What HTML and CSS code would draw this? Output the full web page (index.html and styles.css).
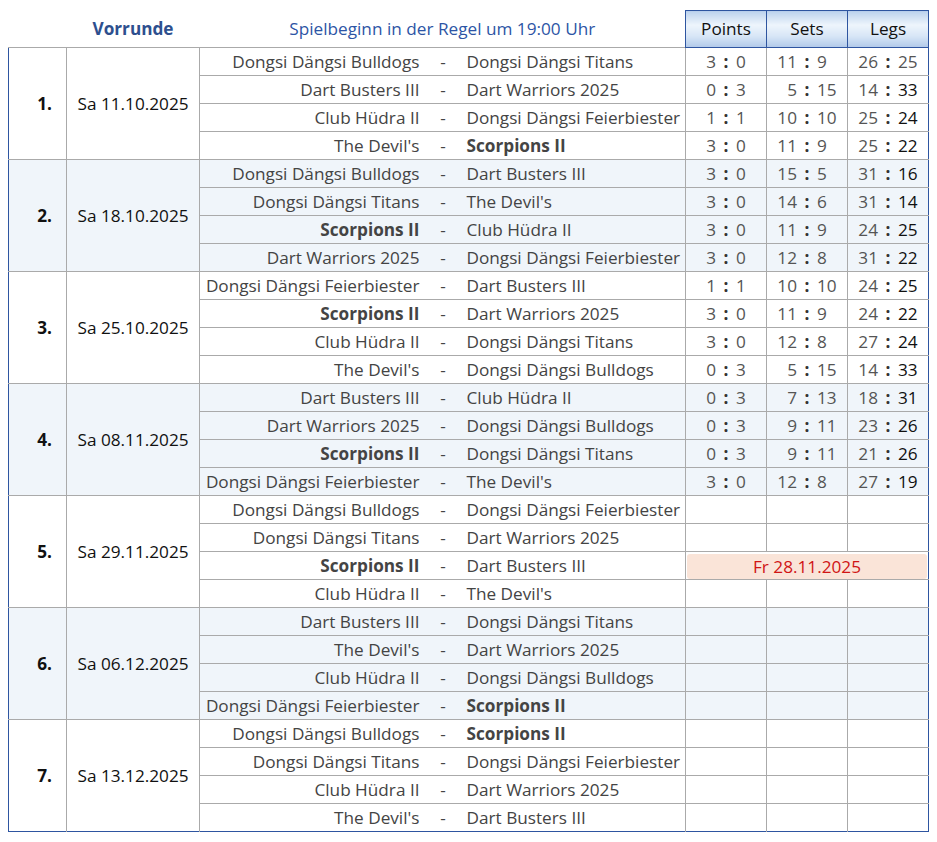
FILE: index.html
```html
<!DOCTYPE html>
<html lang="de">
<head>
<meta charset="utf-8">
<title>Vorrunde</title>
<link rel="stylesheet" href="styles.css">
</head>
<body>
<table class="sched">
  <colgroup>
    <col class="c-rnd"><col class="c-date"><col class="c-home"><col class="c-dash"><col class="c-away"><col class="c-sc"><col class="c-sc"><col class="c-sc">
  </colgroup>
  <thead>
    <tr>
      <th class="h-plain"></th>
      <th class="h-plain h-title">Vorrunde</th>
      <th class="h-plain h-note" colspan="3">Spielbeginn in der Regel um 19:00 Uhr</th>
      <th class="h-box">Points</th>
      <th class="h-box">Sets</th>
      <th class="h-box">Legs</th>
    </tr>
  </thead>
  <tbody>
    <tr><td class="rnd" rowspan="4">1.</td><td class="date" rowspan="4">Sa 11.10.2025</td><td class="home">Dongsi Dängsi Bulldogs</td><td class="dash">-</td><td class="away">Dongsi Dängsi Titans</td><td class="sc"><span class="l">3</span><b>:</b><span class="r">0</span></td><td class="sc"><span class="l">11</span><b>:</b><span class="r">9</span></td><td class="sc"><span class="l">26</span><b>:</b><span class="r">25</span></td></tr>
    <tr><td class="home">Dart Busters III</td><td class="dash">-</td><td class="away">Dart Warriors 2025</td><td class="sc"><span class="l">0</span><b>:</b><span class="r">3</span></td><td class="sc"><span class="l">5</span><b>:</b><span class="r">15</span></td><td class="sc lg"><span class="l">14</span><b>:</b><span class="r">33</span></td></tr>
    <tr><td class="home">Club Hüdra II</td><td class="dash">-</td><td class="away">Dongsi Dängsi Feierbiester</td><td class="sc"><span class="l">1</span><b>:</b><span class="r">1</span></td><td class="sc"><span class="l">10</span><b>:</b><span class="r">10</span></td><td class="sc lg"><span class="l">25</span><b>:</b><span class="r">24</span></td></tr>
    <tr><td class="home">The Devil's</td><td class="dash">-</td><td class="away"><strong>Scorpions II</strong></td><td class="sc"><span class="l">3</span><b>:</b><span class="r">0</span></td><td class="sc"><span class="l">11</span><b>:</b><span class="r">9</span></td><td class="sc lg"><span class="l">25</span><b>:</b><span class="r">22</span></td></tr>
  </tbody>
  <tbody class="alt">
    <tr><td class="rnd" rowspan="4">2.</td><td class="date" rowspan="4">Sa 18.10.2025</td><td class="home">Dongsi Dängsi Bulldogs</td><td class="dash">-</td><td class="away">Dart Busters III</td><td class="sc"><span class="l">3</span><b>:</b><span class="r">0</span></td><td class="sc"><span class="l">15</span><b>:</b><span class="r">5</span></td><td class="sc lg"><span class="l">31</span><b>:</b><span class="r">16</span></td></tr>
    <tr><td class="home">Dongsi Dängsi Titans</td><td class="dash">-</td><td class="away">The Devil's</td><td class="sc"><span class="l">3</span><b>:</b><span class="r">0</span></td><td class="sc"><span class="l">14</span><b>:</b><span class="r">6</span></td><td class="sc lg"><span class="l">31</span><b>:</b><span class="r">14</span></td></tr>
    <tr><td class="home"><strong>Scorpions II</strong></td><td class="dash">-</td><td class="away">Club Hüdra II</td><td class="sc"><span class="l">3</span><b>:</b><span class="r">0</span></td><td class="sc"><span class="l">11</span><b>:</b><span class="r">9</span></td><td class="sc lg"><span class="l">24</span><b>:</b><span class="r">25</span></td></tr>
    <tr><td class="home">Dart Warriors 2025</td><td class="dash">-</td><td class="away">Dongsi Dängsi Feierbiester</td><td class="sc"><span class="l">3</span><b>:</b><span class="r">0</span></td><td class="sc"><span class="l">12</span><b>:</b><span class="r">8</span></td><td class="sc lg"><span class="l">31</span><b>:</b><span class="r">22</span></td></tr>
  </tbody>
  <tbody>
    <tr><td class="rnd" rowspan="4">3.</td><td class="date" rowspan="4">Sa 25.10.2025</td><td class="home">Dongsi Dängsi Feierbiester</td><td class="dash">-</td><td class="away">Dart Busters III</td><td class="sc"><span class="l">1</span><b>:</b><span class="r">1</span></td><td class="sc"><span class="l">10</span><b>:</b><span class="r">10</span></td><td class="sc lg"><span class="l">24</span><b>:</b><span class="r">25</span></td></tr>
    <tr><td class="home"><strong>Scorpions II</strong></td><td class="dash">-</td><td class="away">Dart Warriors 2025</td><td class="sc"><span class="l">3</span><b>:</b><span class="r">0</span></td><td class="sc"><span class="l">11</span><b>:</b><span class="r">9</span></td><td class="sc lg"><span class="l">24</span><b>:</b><span class="r">22</span></td></tr>
    <tr><td class="home">Club Hüdra II</td><td class="dash">-</td><td class="away">Dongsi Dängsi Titans</td><td class="sc"><span class="l">3</span><b>:</b><span class="r">0</span></td><td class="sc"><span class="l">12</span><b>:</b><span class="r">8</span></td><td class="sc lg"><span class="l">27</span><b>:</b><span class="r">24</span></td></tr>
    <tr><td class="home">The Devil's</td><td class="dash">-</td><td class="away">Dongsi Dängsi Bulldogs</td><td class="sc"><span class="l">0</span><b>:</b><span class="r">3</span></td><td class="sc"><span class="l">5</span><b>:</b><span class="r">15</span></td><td class="sc lg"><span class="l">14</span><b>:</b><span class="r">33</span></td></tr>
  </tbody>
  <tbody class="alt">
    <tr><td class="rnd" rowspan="4">4.</td><td class="date" rowspan="4">Sa 08.11.2025</td><td class="home">Dart Busters III</td><td class="dash">-</td><td class="away">Club Hüdra II</td><td class="sc"><span class="l">0</span><b>:</b><span class="r">3</span></td><td class="sc"><span class="l">7</span><b>:</b><span class="r">13</span></td><td class="sc lg"><span class="l">18</span><b>:</b><span class="r">31</span></td></tr>
    <tr><td class="home">Dart Warriors 2025</td><td class="dash">-</td><td class="away">Dongsi Dängsi Bulldogs</td><td class="sc"><span class="l">0</span><b>:</b><span class="r">3</span></td><td class="sc"><span class="l">9</span><b>:</b><span class="r">11</span></td><td class="sc lg"><span class="l">23</span><b>:</b><span class="r">26</span></td></tr>
    <tr><td class="home"><strong>Scorpions II</strong></td><td class="dash">-</td><td class="away">Dongsi Dängsi Titans</td><td class="sc"><span class="l">0</span><b>:</b><span class="r">3</span></td><td class="sc"><span class="l">9</span><b>:</b><span class="r">11</span></td><td class="sc lg"><span class="l">21</span><b>:</b><span class="r">26</span></td></tr>
    <tr><td class="home">Dongsi Dängsi Feierbiester</td><td class="dash">-</td><td class="away">The Devil's</td><td class="sc"><span class="l">3</span><b>:</b><span class="r">0</span></td><td class="sc"><span class="l">12</span><b>:</b><span class="r">8</span></td><td class="sc lg"><span class="l">27</span><b>:</b><span class="r">19</span></td></tr>
  </tbody>
  <tbody>
    <tr><td class="rnd" rowspan="4">5.</td><td class="date" rowspan="4">Sa 29.11.2025</td><td class="home">Dongsi Dängsi Bulldogs</td><td class="dash">-</td><td class="away">Dongsi Dängsi Feierbiester</td><td class="sc"></td><td class="sc"></td><td class="sc"></td></tr>
    <tr><td class="home">Dongsi Dängsi Titans</td><td class="dash">-</td><td class="away">Dart Warriors 2025</td><td class="sc"></td><td class="sc"></td><td class="sc"></td></tr>
    <tr><td class="home"><strong>Scorpions II</strong></td><td class="dash">-</td><td class="away">Dart Busters III</td><td class="moved" colspan="3"><div class="moved-box">Fr 28.11.2025</div></td></tr>
    <tr><td class="home">Club Hüdra II</td><td class="dash">-</td><td class="away">The Devil's</td><td class="sc"></td><td class="sc"></td><td class="sc"></td></tr>
  </tbody>
  <tbody class="alt">
    <tr><td class="rnd" rowspan="4">6.</td><td class="date" rowspan="4">Sa 06.12.2025</td><td class="home">Dart Busters III</td><td class="dash">-</td><td class="away">Dongsi Dängsi Titans</td><td class="sc"></td><td class="sc"></td><td class="sc"></td></tr>
    <tr><td class="home">The Devil's</td><td class="dash">-</td><td class="away">Dart Warriors 2025</td><td class="sc"></td><td class="sc"></td><td class="sc"></td></tr>
    <tr><td class="home">Club Hüdra II</td><td class="dash">-</td><td class="away">Dongsi Dängsi Bulldogs</td><td class="sc"></td><td class="sc"></td><td class="sc"></td></tr>
    <tr><td class="home">Dongsi Dängsi Feierbiester</td><td class="dash">-</td><td class="away"><strong>Scorpions II</strong></td><td class="sc"></td><td class="sc"></td><td class="sc"></td></tr>
  </tbody>
  <tbody>
    <tr><td class="rnd" rowspan="4">7.</td><td class="date" rowspan="4">Sa 13.12.2025</td><td class="home">Dongsi Dängsi Bulldogs</td><td class="dash">-</td><td class="away"><strong>Scorpions II</strong></td><td class="sc"></td><td class="sc"></td><td class="sc"></td></tr>
    <tr><td class="home">Dongsi Dängsi Titans</td><td class="dash">-</td><td class="away">Dongsi Dängsi Feierbiester</td><td class="sc"></td><td class="sc"></td><td class="sc"></td></tr>
    <tr><td class="home">Club Hüdra II</td><td class="dash">-</td><td class="away">Dart Warriors 2025</td><td class="sc"></td><td class="sc"></td><td class="sc"></td></tr>
    <tr><td class="home">The Devil's</td><td class="dash">-</td><td class="away">Dart Busters III</td><td class="sc"></td><td class="sc"></td><td class="sc"></td></tr>
  </tbody>
</table>
</body>
</html>
```

FILE: styles.css
```css
body {
  margin: 10px 8px 8px;
  background: #ffffff;
  font-family: "Open Sans", "Noto Sans", sans-serif;
  font-size: 17.2px;
  color: #444444;
}

.sched {
  border-collapse: collapse;
  table-layout: fixed;
  width: 921px;
}

.c-rnd { width: 58px; }
.c-date { width: 133px; }
.c-home { width: 226px; }
.c-dash { width: 35px; }
.c-away { width: 225px; }
.c-sc { width: 81px; }

.sched th {
  height: 36px;
  padding: 0;
  font-weight: normal;
  vertical-align: middle;
}

.h-title {
  color: #2d4f8e;
  font-weight: bold !important;
  text-align: center;
}

.h-note {
  color: #2d55a5;
  text-align: center;
}

.sched th.h-box {
  height: 34px;
  padding-bottom: 2px;
  border: 1px solid #2e55a0;
  color: #111111;
  text-align: center;
  background: linear-gradient(#bdd3ee 0%, #eef5fc 38%, #d6e5f6 70%, #b1c9e9 100%);
}

.sched tbody {
  border: 1px solid #2e55a0;
}

.sched tbody.alt {
  background: #f0f5fa;
}

.sched td {
  height: 27px;
  padding: 0;
  border-top: 1px solid #aaaaaa;
  white-space: nowrap;
  vertical-align: middle;
  line-height: 20px;
}

.sched td.rnd {
  text-align: right;
  padding-right: 14px;
  font-weight: bold;
  color: #111111;
  border-right: 1px solid #aaaaaa;
}

.sched td.date {
  text-align: center;
  color: #111111;
  border-right: 1px solid #aaaaaa;
}

.sched td.home {
  text-align: right;
  padding-right: 6px;
}

.sched td.dash {
  text-align: center;
}

.sched td.away {
  text-align: left;
  padding-left: 6px;
}

.sched strong {
  font-weight: bold;
  color: #444444;
}

.sched td.sc {
  border-left: 1px solid #aaaaaa;
  color: #555555;
  text-align: center;
}

.sc .l,
.sc .r {
  display: inline-block;
  width: 30px;
}

.sc .l {
  text-align: right;
}

.sc .r {
  text-align: left;
}

.sc b {
  display: inline-block;
  width: 20px;
  text-align: center;
  color: #333333;
  font-weight: bold;
}

.sc.lg .r {
  color: #111111;
}

.sched td.moved {
  height: 26px;
  border-left: 1px solid #aaaaaa;
  padding: 1px 1px 0;
}

.moved-box {
  height: 25px;
  line-height: 25px;
  background: #fae4d8;
  border-radius: 3px;
  color: #d01515;
  text-align: center;
}
```
